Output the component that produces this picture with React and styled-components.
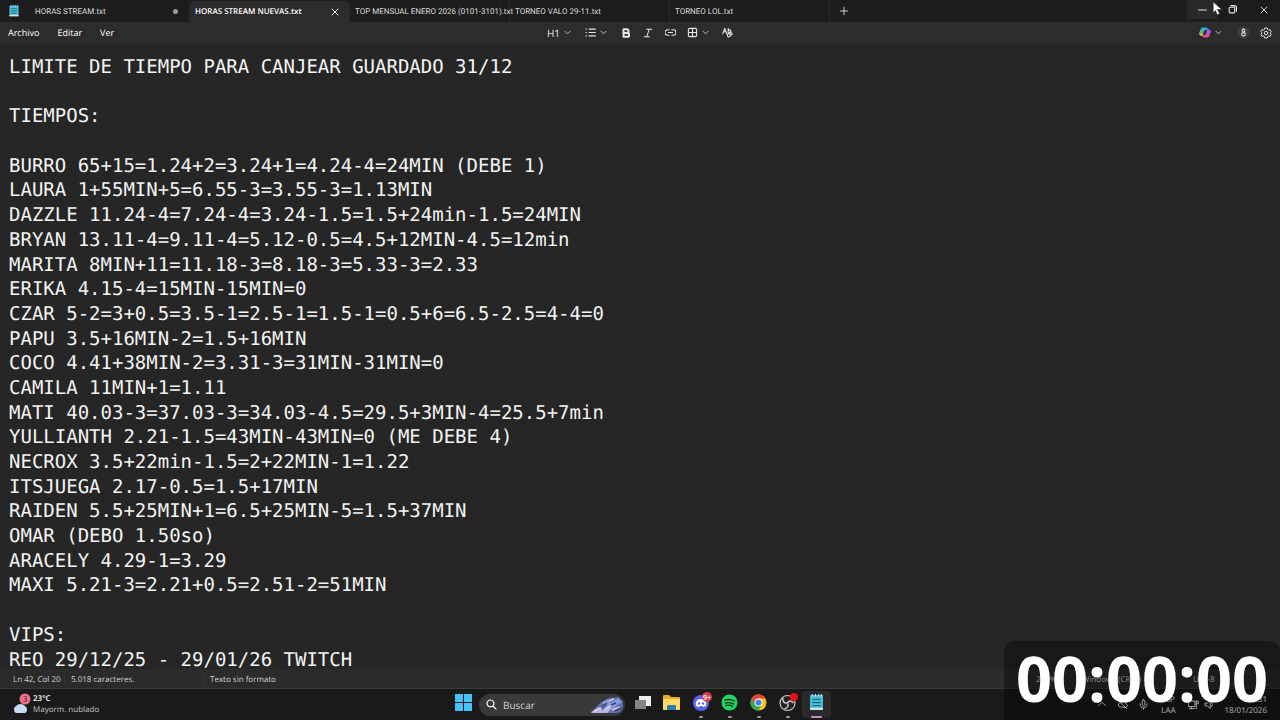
import React from "react"
import styled, { createGlobalStyle, css } from "styled-components"

const GlobalStyle = createGlobalStyle`
  * {
    box-sizing: border-box;
  }
  body {
    margin: 0;
    background: #262626;
    color: #fff;
    font-family: "Open Sans", "Noto Sans", sans-serif;
    font-size: 9px;
    text-rendering: geometricPrecision;
  }
  button, input, textarea {
    font: inherit;
    color: inherit;
    text-rendering: inherit;
    border: 0;
    padding: 0;
    margin: 0;
    background: none;
    outline: none;
  }
`
const Screen = styled.div`
  display: flex;
  flex-direction: column;
  height: 100vh;
  overflow: hidden;
`
const TabBar = styled.header`
  display: flex;
  align-items: stretch;
  height: 22px;
  flex: none;
  background: #1d1d1d;
`
const FileTab = styled.div`
  display: flex;
  align-items: center;
  width: ${(p) => p.$width || 160}px;
  padding: 0 ${(p) => (p.$flush ? 0 : 11)}px 0 5px;
  font-family: Roboto, "Open Sans", sans-serif;
  font-size: 8px;
  white-space: nowrap;
  color: #dcdcdc;
  border-right: 1px solid #282828;
  ${(p) => p.$active && css`
    margin-top: 1px;
    padding-right: 10px;
    font-family: "Open Sans", sans-serif;
    color: #fff;
    font-weight: 600;
    background: #2c2c2c;
    border-radius: 5px 5px 0 0;
  `}
`
const TabName = styled.button`
  flex: 1;
  text-align: left;
  white-space: nowrap;
`
const Dot = styled.span`
  width: 5px;
  height: 5px;
  border-radius: 50%;
  background: #999;
`
const AppIcon = styled.span`
  display: flex;
  margin: 0 15px 0 3px;
`
const IconButton = styled.button`
  display: flex;
  align-items: center;
  justify-content: center;
  gap: 4px;
  width: ${(p) => p.$width || 22}px;
  font-size: 10px;
  color: #e4e4e4;
  background: ${(p) => p.$bg || "none"};
`
const WindowButtons = styled.div`
  display: flex;
  align-items: stretch;
  height: 19px;
  margin-left: auto;
`
const MenuBar = styled.nav`
  display: grid;
  grid-template-columns: 1fr auto 1fr;
  align-items: center;
  height: 21px;
  flex: none;
  background: #2c2c2c;
`
const Menus = styled.div`
  display: flex;
  gap: 18px;
  padding-left: 8px;
`
const Tools = styled.div`
  display: flex;
  align-items: center;
`
const SideTools = styled(Tools)`
  justify-content: flex-end;
  padding-right: 3px;
`
const Account = styled.span`
  display: flex;
  align-items: center;
  justify-content: center;
  width: 13px;
  height: 13px;
  border-radius: 50%;
  background: #3c3c3c;
`
const Editor = styled.textarea`
  display: block;
  flex: 1;
  min-height: 0;
  width: 100%;
  padding: 12px 9px 0;
  resize: none;
  overflow: hidden;
  white-space: pre;
  font-family: "DejaVu Sans Mono", "Liberation Mono", monospace;
  font-size: 19px;
  line-height: 1.3;
  color: #f4f4f4;
  background: #262626;
`
const StatusBar = styled.footer`
  display: flex;
  align-items: center;
  height: 20px;
  flex: none;
  padding: 1px 0 0 13px;
  font-size: 8px;
  color: #d4d4d4;
  background: #2b2b2b;
  border-bottom: 1px solid #3a3a3a;
`
const Status = styled.span`
  width: ${(p) => p.$width}px;
  padding-left: ${(p) => p.$pad || 0}px;
  border-left: ${(p) => (p.$pad ? "1px solid #363636" : "0")};
  white-space: nowrap;
`
const StatusRight = styled.div`
  display: flex;
  margin-left: auto;
`
const Taskbar = styled.div`
  display: grid;
  grid-template-columns: 1fr auto 1fr;
  align-items: center;
  height: 31px;
  flex: none;
  background: #1a1a1a;
`
const Weather = styled.button`
  display: flex;
  align-items: center;
  gap: 2px;
  padding: 0 0 1px 11px;
  text-align: left;
  font-size: 8px;
  line-height: 11px;
  color: #c4c4c4;
  strong {
    display: block;
    font-weight: 600;
    color: #fff;
  }
`
const Apps = styled.div`
  display: flex;
  align-items: center;
`
const AppButton = styled.button`
  display: flex;
  flex-direction: column;
  align-items: center;
  justify-content: space-between;
  width: 29px;
  height: 27px;
  padding-top: 3px;
  border-radius: 4px;
  background: ${(p) => (p.$active ? "#2a2a2a" : "none")};
  &::after {
    content: "";
    width: ${(p) => (p.$active ? 11 : 4)}px;
    height: 2px;
    border-radius: 1px;
    background: ${(p) => (p.$active ? "#d48bd6" : p.$running ? "#999" : "transparent")};
  }
`
const Search = styled.label`
  display: flex;
  align-items: center;
  gap: 6px;
  width: 146px;
  height: 22px;
  margin: 0 3px 0 1px;
  padding: 0 1px 0 7px;
  border-radius: 11px;
  background: #393939;
`
const SearchInput = styled.input`
  flex: 1;
  min-width: 0;
  font-size: 10px;
  &::placeholder {
    color: #d0d0d0;
    opacity: 1;
  }
`
const Tray = styled.div`
  display: flex;
  align-items: center;
  justify-content: flex-end;
  padding: 0 13px 0 0;
  font-size: 8px;
  line-height: 11px;
  color: #fff;
`
const TrayIcons = styled.div`
  display: flex;
  gap: ${(p) => p.$gap}px;
`
const Language = styled.span`
  margin: 0 12px;
`
const Clock = styled.time`
  margin-left: 10px;
  text-align: right;
`
const Timer = styled.div`
  position: fixed;
  right: 0;
  bottom: 0;
  display: flex;
  justify-content: center;
  width: 276px;
  height: 79px;
  border-radius: 10px 10px 0 0;
  background: rgba(0, 0, 0, 0.35);
  font-family: "Open Sans", sans-serif;
  font-weight: 700;
  font-size: 63px;
  line-height: 76px;
  color: #fff;
`
const Pointer = styled.svg`
  position: fixed;
  top: 2px;
  right: 57px;
`

const NOTES = `LIMITE DE TIEMPO PARA CANJEAR GUARDADO 31/12

TIEMPOS:

BURRO 65+15=1.24+2=3.24+1=4.24-4=24MIN (DEBE 1)
LAURA 1+55MIN+5=6.55-3=3.55-3=1.13MIN
DAZZLE 11.24-4=7.24-4=3.24-1.5=1.5+24min-1.5=24MIN
BRYAN 13.11-4=9.11-4=5.12-0.5=4.5+12MIN-4.5=12min
MARITA 8MIN+11=11.18-3=8.18-3=5.33-3=2.33
ERIKA 4.15-4=15MIN-15MIN=0
CZAR 5-2=3+0.5=3.5-1=2.5-1=1.5-1=0.5+6=6.5-2.5=4-4=0
PAPU 3.5+16MIN-2=1.5+16MIN
COCO 4.41+38MIN-2=3.31-3=31MIN-31MIN=0
CAMILA 11MIN+1=1.11
MATI 40.03-3=37.03-3=34.03-4.5=29.5+3MIN-4=25.5+7min
YULLIANTH 2.21-1.5=43MIN-43MIN=0 (ME DEBE 4)
NECROX 3.5+22min-1.5=2+22MIN-1=1.22
ITSJUEGA 2.17-0.5=1.5+17MIN
RAIDEN 5.5+25MIN+1=6.5+25MIN-5=1.5+37MIN
OMAR (DEBO 1.50so)
ARACELY 4.29-1=3.29
MAXI 5.21-3=2.21+0.5=2.51-2=51MIN

VIPS:
REO 29/12/25 - 29/01/26 TWITCH`

const Line = ({ d, size = 11, box = 16, width = 1.4 }) => (
  <svg width={size} height={size} viewBox={`0 0 ${box} ${box}`} fill="none" stroke="currentColor" strokeWidth={width} strokeLinecap="round" strokeLinejoin="round">
    <path d={d} />
  </svg>
)
const Chevron = () => <Line size={7} d="M2 5l6 6 6-6" width={1.8} />
const Close = () => <Line size={8} d="M2 2l12 12M14 2L2 14" width={1.8} />

const Notepad = ({ size = 12 }) => (
  <svg width={size} height={size} viewBox="0 0 16 16">
    <path d="M2 1h12v14H2z" fill="#4cc5dc" />
    <path d="M2 13h12v2H2z" fill="#d7e5e8" />
    <path d="M4 5h8M4 8h8M4 11h8" stroke="#14677c" strokeWidth="1.2" />
    <path d="M4 0v2M7 0v2M10 0v2M12.500 0v2" stroke="#b8eef5" />
  </svg>
)

const Copilot = () => (
  <svg width="12" height="11" viewBox="0 0 24 22">
    <path d="M8 1h7c2 0 2 2 3 5h-5c-2 0-3 2-4 6s-2 5-5 5c-3 0-4-3-3-6l2-6c1-3 2-4 5-4z" fill="#30a9e8" />
    <path d="M1 11c1-4 2-6 4-6h5L7 15c-1 2-2 2-4 2s-3-3-2-6z" fill="#58b96a" />
    <path d="M1 13h7l-1 3q-1 2-4 1-2-1-2-4z" fill="#e8bb35" />
    <path d="M16 21H9c-2 0-2-2-3-5h5c2 0 3-2 4-6s2-5 5-5c3 0 4 3 3 6l-2 6c-1 3-2 4-5 4z" fill="#e34d91" />
    <path d="M23 11c1-3 0-6-3-6-2 0-3 1-4 3l-2 6h6c1 0 2-1 3-3z" fill="#9e5ee5" />
  </svg>
)

const Gear = () => (
  <svg width="12" height="12" viewBox="0 0 24 24" fill="none" stroke="currentColor" strokeWidth="2" strokeLinejoin="round">
    <path d="M9.500 2h5l.7 3 1.800 1 3-.9 2.500 4.300-2.300 2.100v1l2.300 2.100-2.500 4.300-3-.9-1.800 1-.7 3h-5l-.7-3-1.800-1-3 .9-2.500-4.300 2.300-2.100v-1L1.500 9.400 4 5.100l3 .9 1.800-1z" />
    <circle cx="12" cy="12" r="3.500" />
  </svg>
)

const Cloud = () => (
  <svg width="20" height="22" viewBox="0 0 20 22">
    <path d="M5 20a4 4 0 0 1 0-7 6 6 0 0 1 9 0 4 4 0 0 1 0 7z" fill="#c6d9f6" />
    <circle cx="14" cy="6" r="5.500" fill="#f0718c" />
    <text x="14" y="9" fontSize="8" textAnchor="middle" fill="#3b1520">3</text>
  </svg>
)

const Windows = () => (
  <svg width="17" height="17" viewBox="0 0 17 17" fill="#45c3f7">
    <path d="M0 0h8v8H0zM9 0h8v8H9zM0 9h8v8H0zM9 9h8v8H9z" />
  </svg>
)

const SearchArt = () => (
  <svg width="33" height="18" viewBox="0 0 33 18">
    <path d="M0 17l9-10 9-5 9-1q5 4 5 9-1 6-6 7z" fill="#6070ad" />
    <path d="M0 16l8-5 4 3 5-5 5 2-6 6H1z" fill="#b4b5e4" />
    <path d="M10 7l7-4 3 4 7-5 5 4-6 3-5 5-3-5z" fill="#829cdb" />
    <path d="M3 15l7-3M14 14l8-6M21 14l8-3M18 5l5-2" stroke="#e8cce3" strokeWidth="1.500" />
    <path d="M11 11l5-4M20 9l5-2M24 15l6-3" stroke="#35427e" strokeWidth="1.500" />
  </svg>
)

const TaskView = () => (
  <svg width="18" height="17" viewBox="0 0 18 17">
    <path d="M5 2h12v10H5z" fill="#eee" />
    <path d="M1 6h11v9H1z" fill="#858585" />
  </svg>
)

const Folder = () => (
  <svg width="18" height="17" viewBox="0 0 18 17">
    <path d="M0 2q0-1 1-1h5l2 2h8q1 0 1 1v11q0 1-1 1H1q-1 0-1-1z" fill="#e8ae27" />
    <path d="M0 5h17v10q0 1-1 1H1q-1 0-1-1z" fill="#ffda67" />
    <path d="M4 16v-4q0-1 1-1h7q1 0 1 1v4z" fill="#287eb2" />
  </svg>
)

const Discord = () => (
  <svg width="20" height="18" viewBox="0 0 20 18" overflow="visible">
    <circle cx="10" cy="9" r="8" fill="#5865f2" />
    <path d="M6 6q4-2 8 0 2 3 1 6l-3 1-1-1H9l-1 1-3-1q-1-3 1-6z" fill="#fff" />
    <circle cx="8" cy="9.500" r="1.200" fill="#5865f2" />
    <circle cx="12" cy="9.500" r="1.200" fill="#5865f2" />
    <circle cx="16" cy="3" r="5" fill="#d13f4a" />
    <text x="16" y="6" fontSize="7" fontWeight="600" textAnchor="middle" fill="#fff">9+</text>
  </svg>
)

const Spotify = () => (
  <svg width="17" height="17" viewBox="0 0 17 17">
    <circle cx="8.500" cy="8.500" r="8" fill="#1ed760" />
    <path d="M4 6q5-1.500 9.500 1M4.500 9q4-1 8 1M5 11.500q3.500-1 6.500 1" fill="none" stroke="#14351f" strokeWidth="1.400" strokeLinecap="round" />
  </svg>
)

const Chrome = () => (
  <svg width="17" height="17" viewBox="0 0 18 18">
    <circle cx="9" cy="9" r="8.500" fill="#fbc116" />
    <path d="M1.600 4.800A8.500 8.500 0 0 1 16.400 4.800H9L5.400 11.100z" fill="#ea4335" />
    <path d="M1.600 4.800A8.500 8.500 0 0 0 9 17.500L12.600 11.100 5.400 11.100z" fill="#34a853" />
    <circle cx="9" cy="9" r="4.200" fill="#fff" />
    <circle cx="9" cy="9" r="3.300" fill="#4285f4" />
  </svg>
)

const Obs = () => (
  <svg width="19" height="17" viewBox="0 0 19 17" overflow="visible">
    <circle cx="9.500" cy="9" r="7.500" fill="#242424" stroke="#c8c8c8" strokeWidth="1.200" />
    <path d="M9 9q-5 0-4-5M9.500 9q2-4 6 0M9.500 9q2 4-3 6" fill="none" stroke="#c8c8c8" strokeWidth="1.500" />
    <circle cx="16" cy="3" r="4" fill="#f00e13" />
  </svg>
)

export default function App() {
  return (
    <Screen>
      <GlobalStyle />
      <TabBar>
        <FileTab $width={190}>
          <AppIcon><Notepad /></AppIcon>
          <TabName>HORAS STREAM.txt</TabName>
          <Dot />
        </FileTab>
        <FileTab $active>
          <TabName>HORAS STREAM NUEVAS.txt</TabName>
          <Close />
        </FileTab>
        <FileTab $flush><TabName>TOP MENSUAL ENERO 2026 (0101-3101).txt</TabName></FileTab>
        <FileTab><TabName>TORNEO VALO 29-11.txt</TabName></FileTab>
        <FileTab><TabName>TORNEO LOL.txt</TabName></FileTab>
        <IconButton $width={28} aria-label="Nueva pestaña"><Line size={10} d="M8 2v12M2 8h12" /></IconButton>
        <WindowButtons>
          <IconButton $width={30} $bg="#292929" aria-label="Minimizar"><Line size={9} d="M1 9h14" width={1.8} /></IconButton>
          <IconButton $width={30} aria-label="Restaurar"><Line size={9} d="M2 6q0-2 2-2h6q2 0 2 2v6q0 2-2 2H4q-2 0-2-2zM5 1h6q4 0 4 4v6" width={2} /></IconButton>
          <IconButton $width={33} aria-label="Cerrar"><Close /></IconButton>
        </WindowButtons>
      </TabBar>
      <MenuBar>
        <Menus>
          <button>Archivo</button>
          <button>Editar</button>
          <button>Ver</button>
        </Menus>
        <Tools>
          <IconButton $width={36} aria-label="Encabezado">H1 <Chevron /></IconButton>
          <IconButton $width={38} aria-label="Lista"><Line d="M6 3h9M6 8h9M6 13h9M1.500 3h.5M1.500 8h.5M1.500 13h.5" width={1.8} /><Chevron /></IconButton>
          <IconButton aria-label="Negrita"><Line size={10} d="M4 2h5a3 3 0 0 1 0 6H4zM4 8h6a3 3 0 0 1 0 6H4z" width={3.2} /></IconButton>
          <IconButton aria-label="Cursiva"><Line size={10} d="M6 2h8M2 14h8M10 2L6 14" width={1.6} /></IconButton>
          <IconButton aria-label="Vínculo"><Line d="M6 4H4a4 4 0 0 0 0 8h2M10 4h2a4 4 0 0 1 0 8h-2M5 8h6" width={1.6} /></IconButton>
          <IconButton $width={34} aria-label="Tabla"><Line d="M4 2h8q2 0 2 2v8q0 2-2 2H4q-2 0-2-2V4q0-2 2-2zM8 2v12M2 8h12" width={1.6} /><Chevron /></IconButton>
          <IconButton $width={24} aria-label="Borrar formato"><Line d="M1 10l3-8 3 8M2 7h4M9 2v7M9 5q4-2 4 1t-4 3M8 11l4-4 3 3-4 4q-2 1-3-1zM10 9l3 3" width={1.6} /></IconButton>
        </Tools>
        <SideTools>
          <IconButton $width={42} aria-label="Copilot"><Copilot /><Chevron /></IconButton>
          <IconButton $width={24} aria-label="Cuenta"><Account><Line d="M8 2a2.500 2.500 0 1 0 .1 0M5 9h6q1 5-3 5t-3-5z" size={9} width={1.8} /></Account></IconButton>
          <IconButton aria-label="Configuración"><Gear /></IconButton>
        </SideTools>
      </MenuBar>
      <Editor aria-label="Editor de texto" defaultValue={NOTES} spellCheck={false} />
      <StatusBar>
        <Status $width={51}>Ln 42, Col 20</Status>
        <Status $width={139} $pad={6}>5.018 caracteres.</Status>
        <Status $width={100} $pad={6}>Texto sin formato</Status>
        <StatusRight>
          <Status $width={46}>210%</Status>
          <Status $width={111}>Windows (CRLF)</Status>
          <Status $width={87}>UTF-8</Status>
        </StatusRight>
      </StatusBar>
      <Taskbar>
        <Weather>
          <Cloud />
          <span><strong>23°C</strong>Mayorm. nublado</span>
        </Weather>
        <Apps>
          <AppButton aria-label="Inicio"><Windows /></AppButton>
          <Search>
            <Line d="M6.500 1.500a5 5 0 1 0 .1 0M10 10l4.500 4.500" width={1.7} />
            <SearchInput placeholder="Buscar" aria-label="Buscar" />
            <SearchArt />
          </Search>
          <AppButton aria-label="Vista de tareas"><TaskView /></AppButton>
          <AppButton aria-label="Explorador"><Folder /></AppButton>
          <AppButton $running aria-label="Discord"><Discord /></AppButton>
          <AppButton $running aria-label="Spotify"><Spotify /></AppButton>
          <AppButton $running aria-label="Chrome"><Chrome /></AppButton>
          <AppButton $running aria-label="OBS"><Obs /></AppButton>
          <AppButton $active aria-label="Bloc de notas"><Notepad size={17} /></AppButton>
        </Apps>
        <Tray>
          <TrayIcons $gap={10}>
            <Line size={10} d="M2 11l6-6 6 6" />
            <Line d="M3 11q-3-5 3-6 5-4 7 2 5 3 0 5zM2 2l12 12" />
            <Line d="M8 1q-2 0-2 3v4q0 2 2 2t2-2V4q0-3-2-3zM3 7q0 6 5 6t5-6M8 13v2" />
          </TrayIcons>
          <Language>ESP<br />LAA</Language>
          <TrayIcons $gap={5}>
            <Line d="M1 3h9v8H1zM5 11v3M2 14h8M12 3v11M12 3h3v4h-3" />
            <Line d="M2 6h3l4-4v12l-4-4H2zM11 5q3 3 0 6" />
          </TrayIcons>
          <Clock>21:31<br />18/01/2026</Clock>
        </Tray>
      </Taskbar>
      <Timer role="timer">00:00:00</Timer>
      <Pointer width="11" height="14" viewBox="0 0 10 13">
        <path d="M1 0v10l2-2 2 4 2-1-2-4h4z" fill="#fff" stroke="#222" strokeWidth=".5" />
      </Pointer>
    </Screen>
  )
}
